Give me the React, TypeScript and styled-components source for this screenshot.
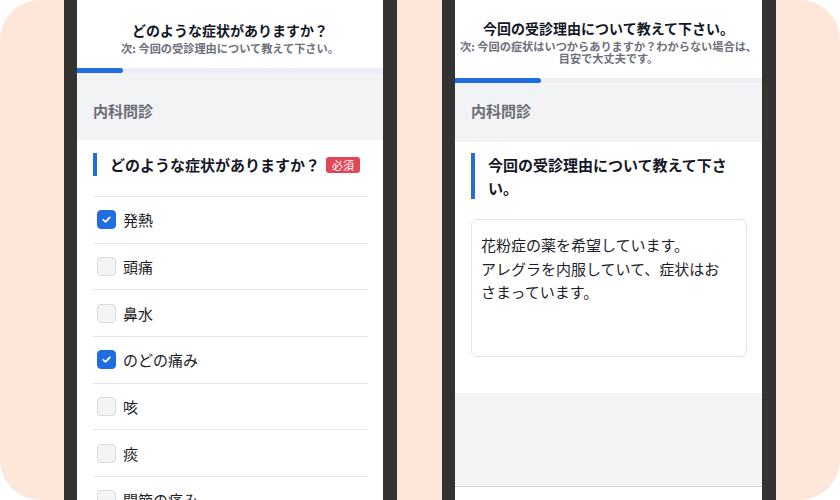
import styled, { createGlobalStyle } from 'styled-components'

const GlobalStyle = createGlobalStyle`
    html, body {
        margin: 0;
        padding: 0;
        background: #ffffff;
    }
    body {
        font-family: "Noto Sans CJK JP", "Noto Sans", sans-serif;
        color: #1b1e28;
    }
`

const BLUE = '#1f6de0'

const Canvas = styled.div`
    width: 840px;
    height: 500px;
    background: #fce7da;
    border-radius: 40px;
    overflow: hidden;
    display: flex;
    padding: 0 64px;
    gap: 45px;
    box-sizing: border-box;
`

const Phone = styled.div`
    height: 500px;
    border-left: 13px solid #333333;
    border-right: 14px solid #333333;
    background: #ffffff;
    overflow: hidden;
    display: flex;
    flex-direction: column;
`

const Screen = styled.div<{ $width: number }>`
    width: ${p => p.$width}px;
    height: 100%;
    display: flex;
    flex-direction: column;
    background: #ffffff;
`

const Header = styled.header<{ $top: number; $bottom: number }>`
    flex-shrink: 0;
    display: flex;
    flex-direction: column;
    align-items: center;
    padding: ${p => p.$top}px 0 ${p => p.$bottom}px;
    text-align: center;
`

const Title = styled.h1`
    margin: 0;
    font-size: 14px;
    line-height: 20px;
    font-weight: 700;
    color: #141826;
`

const Subtitle = styled.p<{ $lh: number }>`
    margin: 2px 0 0;
    font-size: 11.2px;
    line-height: ${p => p.$lh}px;
    font-weight: 700;
    color: #6d7079;
    white-space: nowrap;
`

const Track = styled.div`
    flex-shrink: 0;
    height: 5px;
    background: #eceef3;
`

const Bar = styled.div`
    height: 100%;
    background: ${BLUE};
    border-radius: 0 3px 3px 0;
`

const Section = styled.div<{ $top: number; $bottom: number }>`
    flex-shrink: 0;
    background: #f2f3f5;
    padding: ${p => p.$top}px 16px ${p => p.$bottom}px;
    font-size: 15px;
    line-height: 22px;
    font-weight: 700;
    color: #6b6f78;
`

const Card = styled.div<{ $top: number; $bottom: number }>`
    flex-shrink: 0;
    background: #ffffff;
    padding: ${p => p.$top}px 15px ${p => p.$bottom}px 16px;
`

const Question = styled.h2`
    margin: 0;
    border-left: 4px solid ${BLUE};
    padding-left: 13px;
    font-size: 15px;
    line-height: 23px;
    font-weight: 700;
    color: #141826;
    display: flex;
    align-items: center;
    flex-wrap: wrap;
`

const Badge = styled.span`
    margin-left: 6px;
    width: 34px;
    height: 16px;
    border-radius: 3px;
    background: #e04558;
    color: #ffffff;
    font-size: 11px;
    line-height: 16px;
    font-weight: 400;
    text-align: center;
`

const List = styled.ul`
    list-style: none;
    margin: 20px 0 0;
    padding: 0;
`

const Row = styled.li`
    height: 46.7px;
    border-top: 1px solid #e3e5e9;
    box-sizing: border-box;
    display: flex;
    align-items: center;
    padding-left: 4px;
    gap: 7px;
    font-size: 15px;
    color: #1b1e28;
`

const Box = styled.span<{ $checked: boolean }>`
    width: 19px;
    height: 19px;
    box-sizing: border-box;
    border-radius: 4px;
    display: flex;
    align-items: center;
    justify-content: center;
    background: ${p => (p.$checked ? BLUE : '#f3f4f6')};
    border: 1px solid ${p => (p.$checked ? BLUE : '#d8dbe0')};
`

const TextBox = styled.div`
    margin-top: 20px;
    height: 138px;
    box-sizing: border-box;
    border: 1px solid #e1e3e7;
    border-radius: 6px;
    padding: 13px 9px;
    font-size: 15px;
    line-height: 23.5px;
    color: #1b1e28;
    white-space: nowrap;
`

const Filler = styled.div`
    flex: 1;
    background: #f2f3f5;
`

const Footer = styled.div`
    flex-shrink: 0;
    height: 13px;
    border-top: 1px solid #d4d6db;
    background: #ffffff;
`

const symptoms = [
    { label: '発熱', checked: true },
    { label: '頭痛', checked: false },
    { label: '鼻水', checked: false },
    { label: 'のどの痛み', checked: true },
    { label: '咳', checked: false },
    { label: '痰', checked: false },
    { label: '関節の痛み', checked: false },
]

function Check() {
    return (
        <svg width="11" height="11" viewBox="0 0 12 12" fill="none">
            <path d="M2.5 6.3 L5 8.6 L9.6 3.6" stroke="#ffffff" strokeWidth="1.9" strokeLinecap="round" strokeLinejoin="round" />
        </svg>
    )
}

function App() {
    return (
        <>
            <GlobalStyle />
            <Canvas>
                <Phone>
                    <Screen $width={306}>
                        <Header $top={20} $bottom={13}>
                            <Title>どのような症状がありますか？</Title>
                            <Subtitle $lh={13}>次: 今回の受診理由について教えて下さい。</Subtitle>
                        </Header>
                        <Track>
                            <Bar style={{ width: '15%' }} />
                        </Track>
                        <Section $top={27} $bottom={18}>内科問診</Section>
                        <Card $top={13} $bottom={0}>
                            <Question>
                                どのような症状がありますか？
                                <Badge>必須</Badge>
                            </Question>
                            <List>
                                {symptoms.map(s => (
                                    <Row key={s.label}>
                                        <Box $checked={s.checked}>{s.checked && <Check />}</Box>
                                        {s.label}
                                    </Row>
                                ))}
                            </List>
                        </Card>
                    </Screen>
                </Phone>
                <Phone>
                    <Screen $width={307}>
                        <Header $top={18} $bottom={14}>
                            <Title>今回の受診理由について教えて下さい。</Title>
                            <Subtitle $lh={12}>
                                次: 今回の症状はいつからありますか？わからない場合は、
                                <br />
                                目安で大丈夫です。
                            </Subtitle>
                        </Header>
                        <Track>
                            <Bar style={{ width: '28%' }} />
                        </Track>
                        <Section $top={17} $bottom={20}>内科問診</Section>
                        <Card $top={11} $bottom={36}>
                            <Question>
                                今回の受診理由について教えて下さ
                                <br />
                                い。
                            </Question>
                            <TextBox>
                                花粉症の薬を希望しています。
                                <br />
                                アレグラを内服していて、症状はお
                                <br />
                                さまっています。
                            </TextBox>
                        </Card>
                        <Filler />
                        <Footer />
                    </Screen>
                </Phone>
            </Canvas>
        </>
    )
}

export default App
